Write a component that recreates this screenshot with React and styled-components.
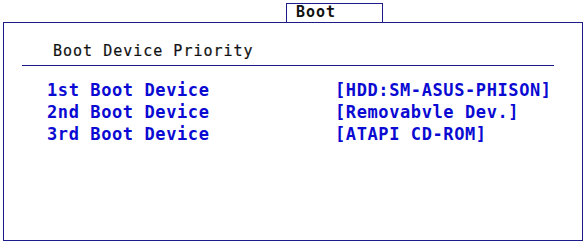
import React from 'react'
import styled, { createGlobalStyle } from 'styled-components'

const GlobalStyle = createGlobalStyle`
  body {
    margin: 0;
    background: #fff;
    font-family: "DejaVu Sans Mono", "Liberation Mono", monospace;
  }
`

const Screen = styled.div`
  width: 587px;
  height: 245px;
  padding-top: 3px;
  box-sizing: border-box;
  background: #fff;
`

const Tab = styled.div`
  box-sizing: border-box;
  width: 97px;
  height: 19px;
  margin-left: 286px;
  padding-left: 9px;
  border: 1px solid #1c1c8a;
  border-bottom: none;

  color: #111;
  font-size: 15px;
  font-weight: bold;
  line-height: 16px;
  letter-spacing: 1px;
`

const Panel = styled.section`
  box-sizing: border-box;
  width: 580px;
  height: 219px;
  margin-left: 3px;
  border: 1px solid #1c1c8a;
`

const SectionTitle = styled.h2`
  margin: 19px 28px 0 18px;
  padding: 0 0 5px 31px;
  border-bottom: 1px solid #1c1c8a;

  color: #111;
  font-size: 15px;
  font-weight: normal;
  line-height: 18px;
  letter-spacing: 1px;
  -webkit-text-stroke: 0.2px #111;
`

const OptionList = styled.div`
  display: grid;
  grid-template-columns: 288px auto;
  margin: 13px 0 0 43px;
`

const OptionCell = styled.div`
  color: #0a0ad2;
  font-size: 17px;
  font-weight: bold;
  line-height: 22px;
  letter-spacing: 0.6px;
  white-space: pre;
`

const options = [
  { label: '1st Boot Device', value: '[HDD:SM-ASUS-PHISON]' },
  { label: '2nd Boot Device', value: '[Removabvle Dev.]' },
  { label: '3rd Boot Device', value: '[ATAPI CD-ROM]' },
]

export default function App() {
  return (
    <Screen>
      <GlobalStyle />
      <Tab>Boot</Tab>
      <Panel>
        <SectionTitle>Boot Device Priority</SectionTitle>
        <OptionList>
          {options.map(option => (
            <React.Fragment key={option.label}>
              <OptionCell>{option.label}</OptionCell>
              <OptionCell>{option.value}</OptionCell>
            </React.Fragment>
          ))}
        </OptionList>
      </Panel>
    </Screen>
  )
}
